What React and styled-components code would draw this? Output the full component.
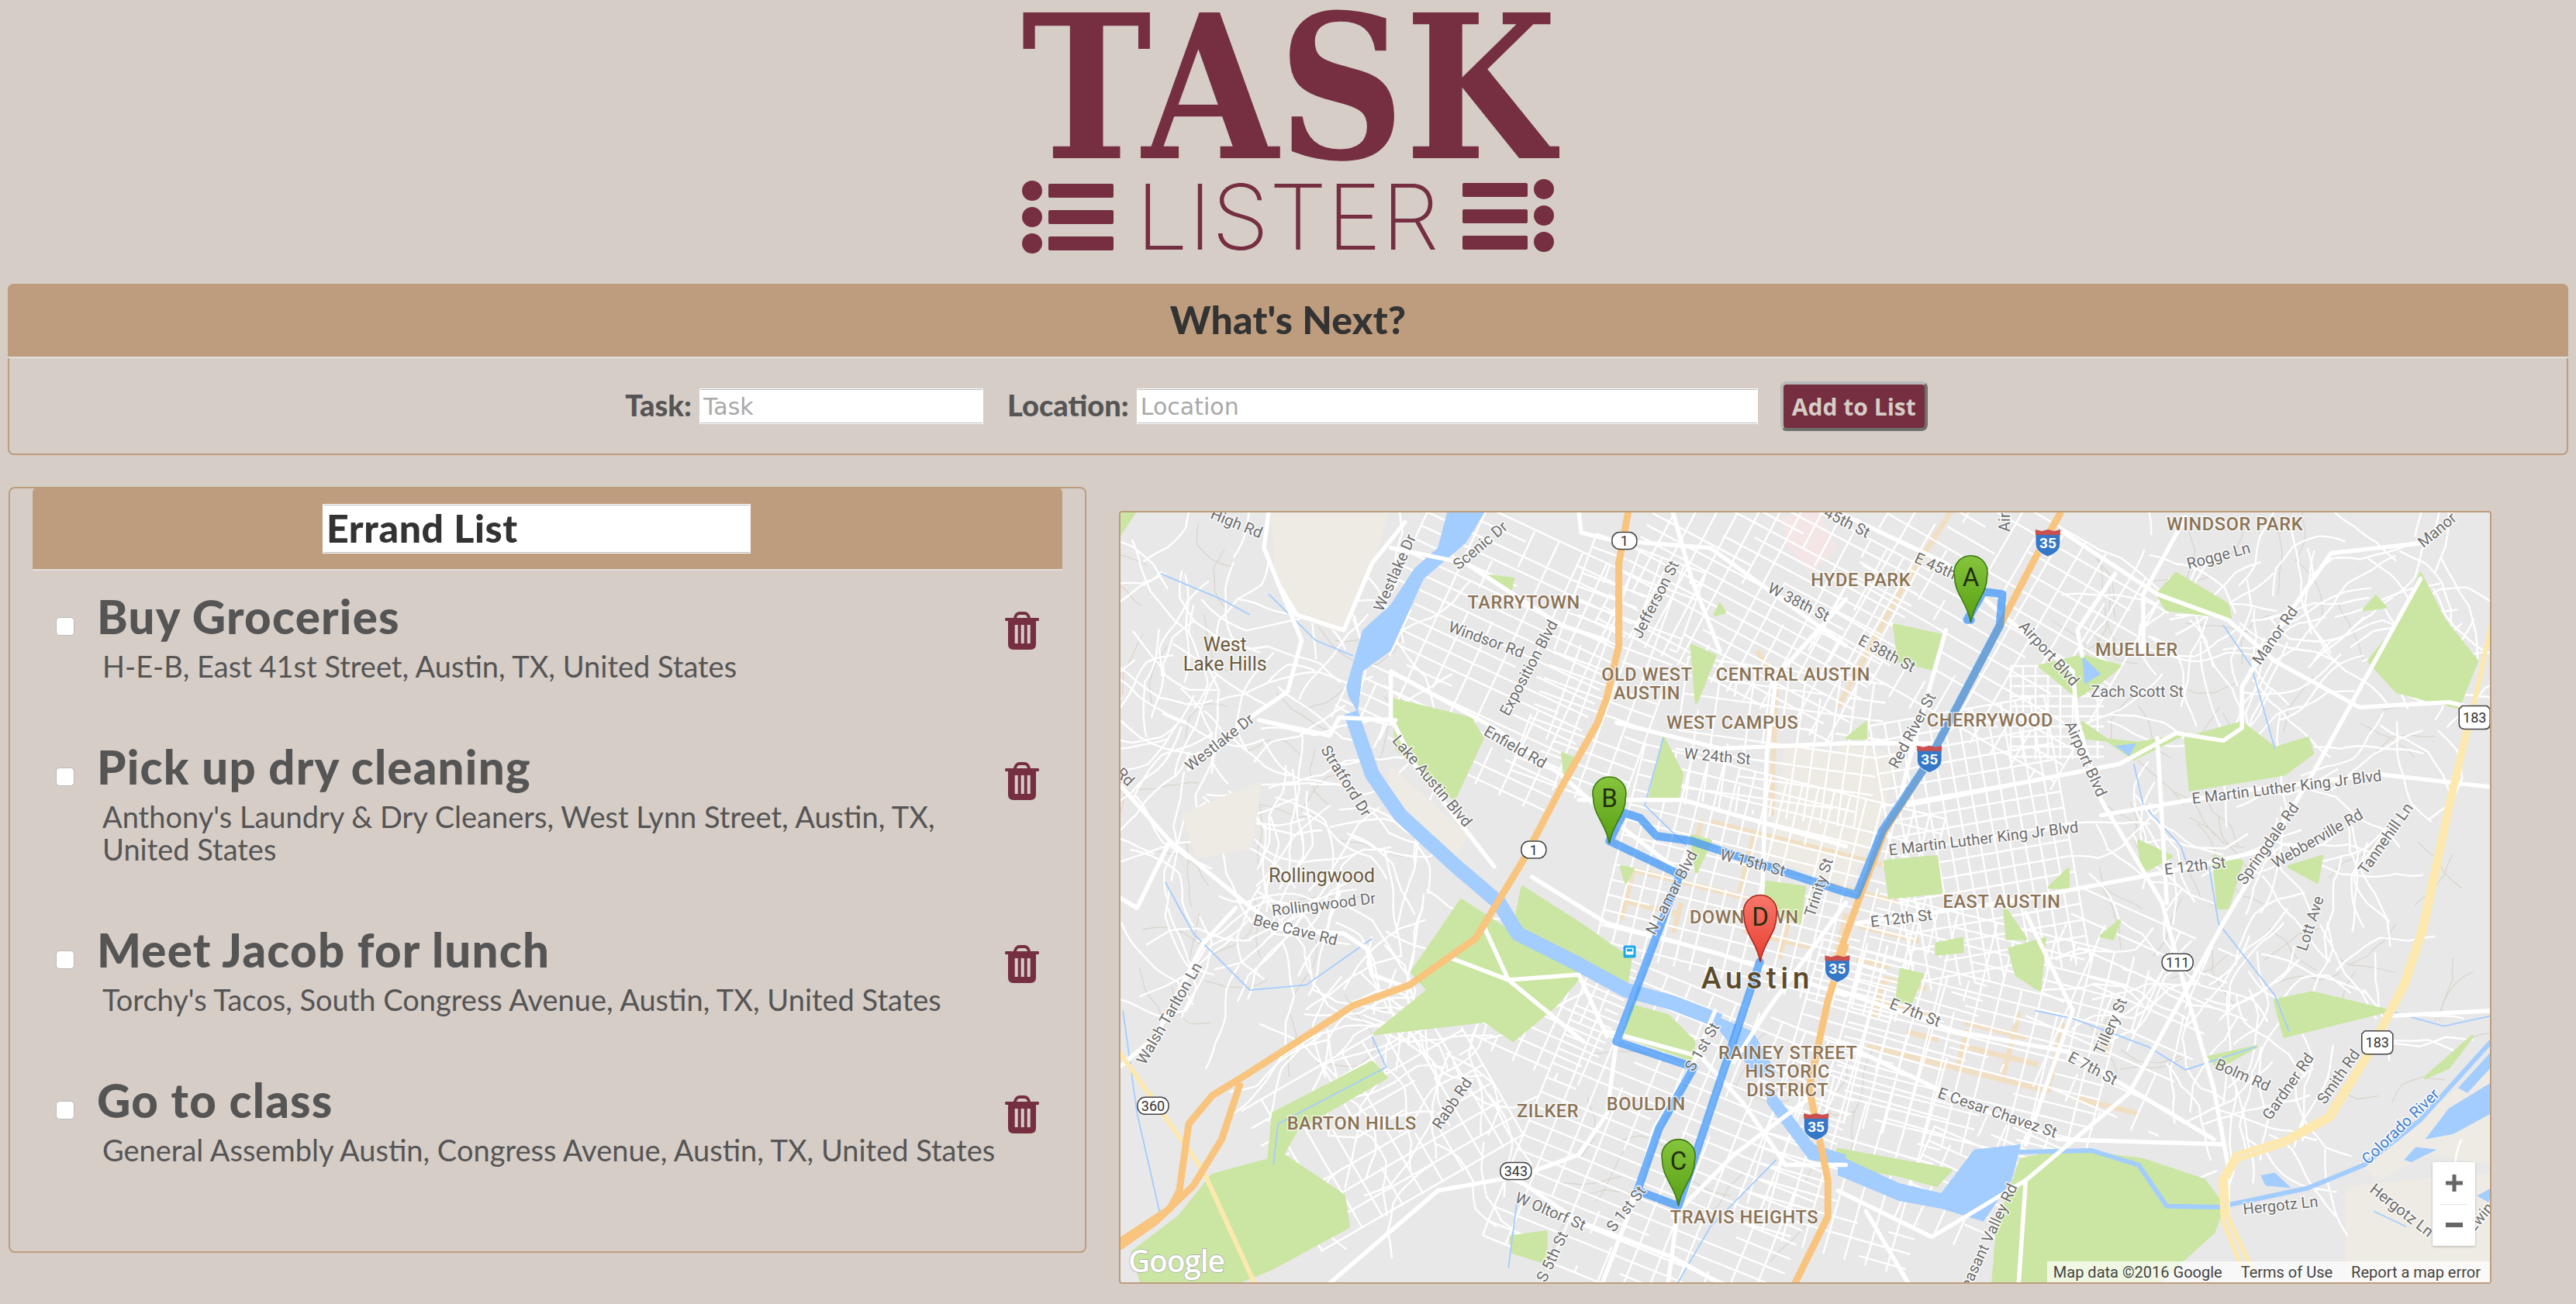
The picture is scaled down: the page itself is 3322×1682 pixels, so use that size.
import React from 'react';
import styled, { createGlobalStyle } from 'styled-components';

const wine = '#752f40';
const tan = '#bd9d7d';
const sand = '#d6cdc7';
const sans = `Lato, 'Open Sans', sans-serif`;

const GlobalStyle = createGlobalStyle`
	html, body {
		margin: 0;
		padding: 0;
		background: ${sand};
		font-family: ${sans};
	}
`;

const Page = styled.div`
	width: 3322px;
	height: 1682px;
	box-sizing: border-box;
	padding: 0 10px;
	overflow: hidden;
`;

const LogoSvg = styled.svg`
	display: block;
	width: 700px;
	height: 340px;
	margin: 0 auto 26px;
`;

const TaskText = styled.text`
	font-family: 'DejaVu Serif', 'Liberation Serif', serif;
	font-weight: 700;
	font-size: 258px;
	fill: ${wine};
`;

const ListerText = styled.text`
	font-family: Inter, Lato, sans-serif;
	font-weight: 250;
	font-size: 117px;
	fill: ${wine};
`;

const Panel = styled.section`
	box-sizing: border-box;
	height: 221px;
	border: 2px solid ${tan};
	border-top: 0;
	border-radius: 8px;
`;

const PanelHead = styled.h2`
	margin: 0 -2px;
	height: 92px;
	padding-bottom: 2px;
	background: ${tan};
	border-bottom: 2px solid #e3dfdb;
	border-radius: 8px 8px 0 0;
	display: flex;
	align-items: center;
	justify-content: center;
	font-size: 50px;
	letter-spacing: 0.2px;
	font-weight: 900;
	color: #333;
`;

const Form = styled.form`
	display: flex;
	align-items: center;
	justify-content: center;
	padding: 30px 30px 0 0;
`;

const Label = styled.label`
	font-size: 38px;
	font-weight: 900;
	color: #555;
	margin: 0 10px 5px 0;
`;

const Field = styled.input`
	box-sizing: border-box;
	width: ${({ $w }) => $w}px;
	height: 46px;
	margin-right: ${({ $gap }) => $gap}px;
	padding: 0 4px;
	background: #fff;
	border: 1px solid #fff;
	box-shadow: inset 0 1px 0 #bbb, inset 0 -1px 0 #bbb;
	font-family: 'DejaVu Sans', sans-serif;
	font-size: 30px;
	outline: none;
	&::placeholder {
		color: #a9a9a9;
		opacity: 1;
	}
`;

const AddButton = styled.button`
	box-sizing: border-box;
	width: 190px;
	height: 64px;
	background: ${wine};
	border: 4px solid;
	border-color: #b8b8b8 #707070 #707070 #b8b8b8;
	border-radius: 8px;
	font-family: 'Open Sans', sans-serif;
	font-weight: 700;
	font-size: 30px;
	color: ${sand};
	padding: 0;
`;

const Columns = styled.div`
	display: flex;
	align-items: flex-start;
	margin-top: 41px;
	padding-left: 1px;
`;

const ListPanel = styled.section`
	box-sizing: border-box;
	width: 1390px;
	height: 988px;
	border: 2px solid ${tan};
	border-radius: 8px;
`;

const ListHead = styled.div`
	margin: -2px 29px 0;
	height: 84px;
	background: ${tan};
	border-bottom: 2px solid #e3dfdb;
	border-radius: 8px 8px 0 0;
	padding: 22px 0 0 374px;
`;

const ListTitle = styled.div`
	box-sizing: border-box;
	width: 552px;
	height: 64px;
	padding-left: 4px;
	background: #fff;
	border: 1px solid #fff;
	box-shadow: inset 0 1px 0 #bbb, inset 0 -1px 0 #bbb;
	font-size: 50px;
	letter-spacing: 0.6px;
	line-height: 60px;
	font-weight: 900;
	color: #333;
`;

const List = styled.ul`
	list-style: none;
	margin: 0;
	padding: 27px 59px 0;
`;

const Item = styled.li`
	display: flex;
	align-items: flex-start;
	margin-bottom: 76px;
`;

const Check = styled.input`
	appearance: none;
	flex: none;
	box-sizing: border-box;
	width: 24px;
	height: 24px;
	margin: 33px 29px 0 0;
	background: #fff;
	border: 1px solid #bbb;
	border-radius: 5px;
`;

const ItemText = styled.div`
	flex: 1;
	min-width: 0;
`;

const ItemTitle = styled.h3`
	margin: 0 0 11px;
	font-size: 60px;
	letter-spacing: 1.2px;
	line-height: 64px;
	font-weight: 900;
	color: #555;
`;

const ItemPlace = styled.p`
	margin: 0 0 1px;
	padding: 0 7px;
	font-size: 38px;
	line-height: 42px;
	color: #555;
`;

const Trash = styled.svg`
	flex: none;
	width: 44px;
	height: 49px;
	margin-top: 26px;
	fill: ${wine};
`;

const MapBox = styled.div`
	position: relative;
	flex: none;
	box-sizing: border-box;
	width: 1770px;
	height: 997px;
	margin: 31px 0 0 42px;
	border: 2px solid ${tan};
	border-radius: 4px;
	overflow: hidden;
	background: #e8e8e8;
`;

const MapSvg = styled.svg`
	display: block;
	width: 1770px;
	height: 997px;
	margin: -2px;
`;

const Street = styled.text`
	font-family: Roboto, sans-serif;
	font-size: 20px;
	fill: #6d6d6d;
	stroke: #fff;
	stroke-width: 3px;
	stroke-opacity: 0.75;
	paint-order: stroke;
	text-anchor: middle;
`;

const Area = styled.text`
	font-family: Roboto, sans-serif;
	font-size: 23.5px;
	font-weight: 500;
	letter-spacing: 0.6px;
	fill: #8b7355;
	stroke: #fff;
	stroke-width: 3px;
	stroke-opacity: 0.7;
	paint-order: stroke;
	text-anchor: middle;
`;

const Place = styled.text`
	font-family: Roboto, sans-serif;
	font-size: 25px;
	fill: #6b5b3e;
	stroke: #fff;
	stroke-width: 3px;
	stroke-opacity: 0.7;
	paint-order: stroke;
	text-anchor: middle;
`;

const City = styled.text`
	font-family: Roboto, sans-serif;
	font-size: 39px;
	font-weight: 500;
	letter-spacing: 5.5px;
	fill: #5c4a2c;
	stroke: #fff;
	stroke-width: 3px;
	stroke-opacity: 0.6;
	paint-order: stroke;
	text-anchor: middle;
`;

const RiverLabel = styled(Street)`
	fill: #3f7fcf;
`;

const ShieldText = styled.text`
	font-family: Roboto, sans-serif;
	font-size: 18px;
	fill: #333;
	text-anchor: middle;
`;

const InterstateText = styled.text`
	font-family: Roboto, sans-serif;
	font-size: 19px;
	font-weight: 700;
	fill: #fff;
	text-anchor: middle;
`;

const PinLetter = styled.text`
	font-family: Roboto, sans-serif;
	font-size: 33px;
	fill: #22300f;
	text-anchor: middle;
`;

const GoogleMark = styled.text`
	font-family: 'Open Sans', sans-serif;
	font-size: 39px;
	font-weight: 600;
	letter-spacing: -1.2px;
	fill: #fff;
	stroke: #a8a8a8;
	stroke-width: 1.5px;
	paint-order: stroke;
`;

const ZoomControl = styled.div`
	position: absolute;
	right: 19px;
	bottom: 47px;
	width: 55px;
	height: 108px;
	background: #fff;
	border-radius: 2px;
	box-shadow: 0 1px 3px rgba(0, 0, 0, 0.25);
	display: flex;
	flex-direction: column;
	align-items: center;
`;

const ZoomButton = styled.div`
	flex: 1;
	display: flex;
	align-items: center;
	justify-content: center;
	width: 100%;
`;

const ZoomRule = styled.div`
	width: 36px;
	height: 1px;
	background: #e4e4e4;
`;

const Credits = styled.div`
	position: absolute;
	right: 0;
	bottom: 0;
	height: 27px;
	display: flex;
	gap: 24px;
	align-items: center;
	padding: 0 12px 0 8px;
	background: rgba(255, 255, 255, 0.7);
	font-family: Roboto, sans-serif;
	font-size: 20px;
	color: #444;
`;

// crop coordinates -> map coordinates (left and right half of the map)
const toL = (x, y) => [x / 1.65 - 13, y / 1.5077 - 18.6];
const toR = (x, y) => [x / 1.65 + 927, y / 1.5077 - 18.6];
const trace = (to, nums, close) => {
	let out = '';
	for (let i = 0; i < nums.length; i += 2) {
		const [x, y] = to(nums[i], nums[i + 1]);
		out += `${i ? 'L' : 'M'}${x.toFixed(1)} ${y.toFixed(1)}`;
	}
	return out + (close ? 'Z' : '');
};
const L = (...n) => trace(toL, n);
const R = (...n) => trace(toR, n);
const LZ = (...n) => trace(toL, n, true);
const RZ = (...n) => trace(toR, n, true);

let seed = 7;
const rnd = () => {
	seed = (seed * 16807) % 2147483647;
	return seed / 2147483647;
};

const grid = (cx, cy, w, h, deg, a, b, drop = 0.14) => {
	const t = (deg * Math.PI) / 180;
	const c = Math.cos(t);
	const s = Math.sin(t);
	const at = (u, v) => `${(cx + u * c - v * s).toFixed(1)} ${(cy + u * s + v * c).toFixed(1)}`;
	let out = '';
	for (let v = -h / 2; v <= h / 2; v += a) {
		let u = -w / 2;
		while (u < w / 2) {
			const len = 24 + rnd() * 70;
			if (rnd() > drop) out += `M${at(u, v)}L${at(Math.min(u + len, w / 2), v)}`;
			u += len;
		}
	}
	for (let u = -w / 2; u <= w / 2; u += b) {
		let v = -h / 2;
		while (v < h / 2) {
			const len = 24 + rnd() * 70;
			if (rnd() > drop) out += `M${at(u, v)}L${at(u, Math.min(v + len, h / 2))}`;
			v += len;
		}
	}
	return out;
};

const wander = (x0, y0, w, h, count, steps = 4, stride = 18) => {
	let out = '';
	for (let i = 0; i < count; i++) {
		let x = x0 + rnd() * w;
		let y = y0 + rnd() * h;
		let dir = rnd() * 6.28;
		out += `M${x.toFixed(1)} ${y.toFixed(1)}`;
		for (let k = 0; k < steps; k++) {
			dir += (rnd() - 0.5) * 1.2;
			const mx = x + Math.cos(dir) * stride;
			const my = y + Math.sin(dir) * stride;
			dir += (rnd() - 0.5) * 0.9;
			x = mx + Math.cos(dir) * stride;
			y = my + Math.sin(dir) * stride;
			out += `Q${mx.toFixed(1)} ${my.toFixed(1)} ${x.toFixed(1)} ${y.toFixed(1)}`;
		}
	}
	return out;
};

const sideStreets = [
	grid(480, 180, 300, 330, 25, 19, 34),
	grid(630, 210, 150, 330, 20, 18, 30),
	grid(830, 110, 350, 260, 28, 17, 24),
	grid(850, 300, 260, 190, 8, 24, 22),
	grid(840, 480, 400, 270, 14, 20, 21, 0.08),
	grid(720, 820, 380, 400, 22, 20, 32),
	grid(960, 770, 220, 390, 16, 20, 28),
	grid(1110, 430, 350, 230, 80, 19, 21, 0.08),
	grid(1110, 680, 340, 300, 14, 19, 26),
	grid(1120, 140, 360, 300, 30, 24, 30),
	grid(1290, 650, 220, 260, 24, 36, 46, 0.3),
	grid(340, 790, 300, 210, -30, 26, 30, 0.3),
	grid(560, 640, 160, 170, 24, 20, 30),
	grid(1210, 260, 120, 120, 0, 13, 16, 0.03),
	grid(1180, 900, 320, 170, 24, 20, 28, 0.2),
	wander(0, 60, 350, 340, 70),
	wander(40, 380, 360, 320, 70),
	wander(260, 640, 220, 240, 30),
	wander(1320, 30, 420, 300, 70),
	wander(1320, 350, 300, 300, 50),
	wander(1350, 650, 300, 260, 30),
].join('');

const lanes = [
	wander(0, 60, 370, 640, 40, 3, 14),
	wander(1250, 40, 500, 720, 60, 3, 14),
	wander(560, 700, 400, 280, 20, 3, 14),
].join('');

const tanStrips = [
	grid(850, 500, 380, 150, 14, 42, 70, 0.5),
	grid(1150, 690, 360, 90, 14, 30, 60, 0.45),
	L(1380, 300, 1420, 360, 1410, 620),
	R(240, 30, 130, 190, 0, 410),
].join('');

const beige = [
	RZ(0, 480, 120, 500, 100, 620, 30, 750, 0, 760),
	LZ(1440, 480, 1568, 500, 1568, 760, 1400, 700),
	RZ(1080, 1350, 1390, 1320, 1390, 1530, 1080, 1530),
	RZ(1110, 1300, 1390, 1100, 1390, 1300, 1260, 1280, 1150, 1330),
];

const openLand = [
	LZ(350, 30, 590, 30, 560, 130, 490, 260, 400, 230, 360, 170),
	LZ(600, 530, 760, 660, 720, 720, 600, 590),
	LZ(160, 620, 320, 560, 300, 680, 190, 700),
	RZ(1090, 1345, 1390, 1320, 1390, 1530, 1090, 1530),
];

const pinkish = [
	LZ(1430, 40, 1510, 30, 1550, 100, 1490, 150, 1440, 90),
	RZ(140, 470, 200, 480, 190, 490),
];

const parks = [
	LZ(605, 395, 770, 432, 795, 470, 735, 588, 612, 490),
	LZ(645, 925, 750, 785, 880, 862, 1005, 930, 950, 990, 860, 1058, 800, 1020, 565, 1045, 680, 960),
	LZ(50, 1470, 150, 1400, 220, 1320, 340, 1290, 350, 1200, 560, 1100, 590, 1130, 400, 1230, 370, 1280, 500, 1360, 510, 1420, 350, 1500, 270, 1530, 70, 1530),
	LZ(880, 760, 1000, 830, 1110, 900, 1100, 960, 970, 900, 860, 850),
	LZ(1110, 990, 1190, 1010, 1245, 1060, 1240, 1095, 1100, 1050),
	LZ(1150, 590, 1180, 470, 1220, 540, 1210, 590),
	LZ(1240, 290, 1290, 310, 1250, 400),
	LZ(1240, 660, 1280, 670, 1250, 730),
	LZ(1400, 750, 1480, 760, 1470, 830, 1395, 800),
	LZ(22, 30, 55, 30, 22, 75),
	LZ(812, 155, 860, 160, 855, 180),
	LZ(1090, 720, 1115, 725, 1100, 750),
	LZ(855, 1440, 930, 1430, 930, 1490, 860, 1470),
	LZ(965, 500, 990, 510, 970, 540),
	LZ(1300, 210, 1310, 225, 1290, 230),
	RZ(680, 190, 720, 150, 830, 210, 835, 235, 700, 220),
	RZ(1130, 320, 1200, 240, 1240, 150, 1290, 240, 1360, 320, 1320, 410, 1190, 380),
	RZ(750, 570, 740, 470, 860, 440, 930, 490, 1000, 470, 1010, 500, 950, 540),
	RZ(510, 390, 430, 330, 520, 310, 600, 330, 560, 360),
	RZ(520, 440, 630, 510, 740, 460, 700, 470, 640, 480, 530, 470),
	RZ(930, 980, 1010, 965, 1170, 1000, 950, 1050),
	RZ(390, 1290, 480, 1270, 650, 1290, 780, 1330, 820, 1380, 800, 1430, 680, 1530, 330, 1530, 340, 1420),
	RZ(100, 710, 210, 700, 220, 770, 110, 780),
	RZ(120, 250, 220, 270, 200, 335, 130, 320),
	RZ(1120, 220, 1145, 195, 1165, 215),
	RZ(355, 800, 400, 860, 360, 860),
	RZ(365, 880, 440, 860, 430, 960, 380, 930),
	RZ(640, 670, 710, 700, 650, 730),
	RZ(960, 720, 1030, 700, 1020, 750),
	RZ(790, 1090, 890, 1070, 810, 1110),
	RZ(450, 760, 490, 725, 490, 760),
	RZ(210, 870, 265, 860, 265, 885, 210, 890),
	RZ(135, 920, 180, 930, 155, 985, 125, 980),
	RZ(1250, 1130, 1350, 1050, 1300, 1110),
	RZ(560, 855, 600, 825, 585, 860),
	RZ(0, 1270, 120, 1290, 240, 1310, 210, 1340, 130, 1320, 0, 1300),
	RZ(20, 470, 60, 440, 60, 470),
	RZ(800, 700, 860, 710, 830, 800, 810, 800),
];

const lakes = [
	LZ(720, 30, 800, 30, 760, 90, 670, 160, 600, 300, 540, 340, 530, 420, 510, 390, 505, 370, 540, 260, 600, 210, 650, 140, 700, 100),
	RZ(0, 1280, 130, 1335, 220, 1355, 290, 1270, 390, 1260, 370, 1330, 310, 1410, 220, 1385, 130, 1370, 0, 1320),
	RZ(1250, 1250, 1300, 1190, 1390, 1140, 1390, 1200, 1310, 1240),
	RZ(1320, 1150, 1390, 1080, 1390, 1110, 1340, 1160),
	RZ(1205, 1290, 1230, 1265, 1275, 1270, 1220, 1295),
	RZ(900, 1320, 930, 1315, 965, 1345, 910, 1340),
	RZ(1360, 1360, 1390, 1345, 1390, 1375),
	RZ(520, 310, 560, 345, 525, 365),
	RZ(590, 485, 635, 480, 620, 505),
	LZ(1290, 1010, 1370, 1040, 1420, 1120, 1380, 1130, 1300, 1040),
	LZ(1400, 1140, 1500, 1260, 1568, 1280, 1568, 1300, 1490, 1290, 1400, 1180),
];

const river = [
	L(515, 420, 560, 540, 620, 620, 740, 720, 830, 790, 870, 850, 1000, 910, 1100, 960, 1200, 985, 1300, 1020),
];

const riverEast = R(385, 1275, 540, 1272, 640, 1300, 700, 1380, 810, 1382, 1000, 1345, 1120, 1300, 1240, 1212, 1390, 1060);

const creeks = [
	L(110, 150, 240, 200, 300, 230),
	L(340, 190, 440, 280, 520, 310),
	L(120, 750, 180, 850, 300, 960, 420, 950, 560, 860),
	L(30, 1000, 60, 1200, 110, 1400),
	L(560, 1050, 590, 1110, 360, 1220, 350, 1300),
	L(1180, 470, 1140, 600, 1230, 680),
	L(870, 1360, 850, 1500),
	L(1210, 1530, 1280, 1420, 1420, 1290),
	R(660, 610, 730, 680, 745, 720),
	R(790, 720, 810, 830, 930, 970, 960, 1040),
	R(820, 250, 880, 330, 930, 490),
	R(420, 1000, 500, 1015, 660, 1070, 740, 1115, 890, 1070),
	R(630, 520, 650, 600),
	R(1170, 1000, 1290, 1030, 1390, 1010),
	R(1140, 1390, 1210, 1420),
].join('');

const arterials = [
	L(1000, 30, 1005, 70, 1070, 85, 1280, 100, 1568, 290),
	L(600, 340, 820, 450, 960, 540, 1060, 620, 1200, 720),
	L(320, 435, 470, 465, 490, 430, 610, 435),
	L(22, 560, 130, 670, 290, 790, 360, 840, 500, 850, 550, 880, 560, 930, 620, 950),
	L(340, 30, 330, 100, 410, 280, 380, 380, 300, 430, 170, 530),
	L(360, 170, 400, 230, 500, 260, 560, 130, 630, 50),
	L(270, 800, 200, 870, 100, 1050, 22, 1110),
	L(720, 895, 850, 940, 1010, 1060),
	L(800, 840, 850, 940, 1000, 930, 1060, 1050),
	L(1225, 700, 1130, 930, 1080, 1060, 1060, 1200, 1000, 1280, 880, 1320, 700, 1350, 470, 1530),
	L(1290, 1000, 1240, 1110, 1160, 1230, 1125, 1350, 1050, 1530),
	L(1385, 905, 1212, 1380, 1190, 1530),
	L(1000, 590, 1220, 590, 1568, 680),
	L(1080, 440, 1300, 490, 1568, 480),
	L(1568, 200, 1420, 350, 1400, 500, 1390, 780),
	L(900, 740, 1060, 830, 1300, 890, 1568, 970),
	L(1060, 1040, 1260, 1090, 1350, 1180, 1440, 1300, 1568, 1300),
	L(840, 1310, 1000, 1410, 1200, 1480, 1300, 1530),
	L(1200, 30, 1240, 160, 1300, 300),
	L(600, 340, 600, 430, 650, 520, 760, 650, 820, 720),
	L(22, 780, 60, 800, 130, 670),
	L(600, 100, 760, 130, 960, 250, 1060, 280),
	L(1568, 790, 1400, 1000, 1330, 1100),
	L(1200, 1400, 1330, 1280, 1490, 1170),
	R(350, 230, 500, 340, 510, 440, 560, 590, 690, 790, 740, 960, 800, 1150, 830, 1300, 830, 1400),
	R(1250, 90, 1050, 110, 920, 280, 860, 370, 860, 450, 820, 475, 720, 460, 600, 520, 150, 600),
	R(480, 70, 680, 190, 830, 240, 930, 320, 1110, 410, 1300, 400, 1390, 420),
	R(560, 620, 880, 570, 1150, 540, 1390, 565),
	R(40, 830, 350, 790, 700, 730, 900, 690),
	R(1240, 160, 1010, 540, 820, 830, 620, 1160, 400, 1330, 385, 1530),
	R(0, 960, 250, 1040, 490, 1080, 800, 1250),
	R(0, 1060, 300, 1190, 470, 1250, 820, 1260),
	R(0, 1350, 200, 1440, 400, 1330),
	R(60, 1390, 150, 1530),
	R(400, 810, 500, 1000, 400, 1260),
	R(590, 150, 510, 260, 520, 310),
	R(220, 480, 0, 480),
	R(740, 40, 650, 190, 650, 300),
	R(230, 260, 150, 520, 130, 600),
	R(0, 30, 230, 130, 350, 230),
	R(680, 470, 700, 790),
	R(1390, 1000, 1180, 1010),
].join('');

const yellowways = [
	L(22, 1080, 200, 1310, 310, 1530),
	R(1390, 250, 1350, 420, 1310, 580, 1250, 840, 1210, 950, 1130, 1090, 1050, 1210, 950, 1260, 850, 1290, 825, 1330, 830, 1400, 885, 1510),
	R(1345, 420, 1300, 590, 1240, 840, 1200, 950, 1120, 1090, 1040, 1205, 950, 1250, 845, 1280, 815, 1330, 820, 1410, 860, 1500),
];

const orangeways = [
	L(1105, 30, 1085, 130, 1085, 290, 1060, 390, 1040, 440, 960, 570, 880, 710, 780, 860, 640, 950, 520, 990, 300, 1120, 220, 1165, 170, 1220, 150, 1350, 130, 1385, 22, 1450),
	L(280, 1140, 240, 1250, 180, 1340, 100, 1410, 22, 1460),
	R(475, 30, 420, 120, 340, 260, 190, 520, 100, 650, 30, 820, 0, 900),
	L(1568, 870, 1530, 980, 1490, 1150, 1530, 1330, 1530, 1400, 1460, 1530),
];

const route = [
	R(283, 240, 275, 240, 310, 185, 350, 190, 345, 250, 190, 520, 95, 650, 40, 775, 0, 765),
	L(1568, 770, 1240, 670, 1165, 660, 1130, 625, 1095, 615, 1065, 670, 1215, 735, 1080, 1060, 1245, 1110, 1170, 1230, 1125, 1350, 1212, 1380, 1385, 905),
].join('');

const streets = [
	[toL, 272, 52, 22, 'High Rd'], [toL, 608, 148, -66, 'Westlake Dr'], [toL, 790, 95, -40, 'Scenic Dr'],
	[toL, 1163, 200, -63, 'Jefferson St'], [toL, 803, 278, 20, 'Windsor Rd'], [toL, 893, 333, -62, 'Exposition Blvd'],
	[toL, 1468, 205, 27, 'W 38th St'], [toL, 1295, 505, 5, 'W 24th St'], [toL, 235, 478, -38, 'Westlake Dr'],
	[toL, 35, 545, 45, 'Rd'], [toL, 505, 553, 58, 'Stratford Dr'], [toL, 688, 553, 50, 'Lake Austin Blvd'],
	[toL, 865, 487, 30, 'Enfield Rd'], [toL, 457, 793, -7, 'Rollingwood Dr'], [toL, 397, 843, 14, 'Bee Cave Rd'],
	[toL, 128, 1005, -60, 'Walsh Tarlton Ln'], [toL, 730, 1180, -56, 'Rabb Rd'], [toL, 940, 1390, 23, 'W Oltorf St'],
	[toL, 943, 1478, -65, 'S 5th St'], [toL, 1100, 1385, -52, 'S 1st St'], [toL, 1262, 1070, -60, 'S 1st St'],
	[toL, 1197, 770, -62, 'N Lamar Blvd'], [toL, 1370, 712, 15, 'W 15th St'], [toL, 1510, 760, -72, 'Trinity St'],
	[toR, 20, 50, 27, '45th St'], [toR, 355, 50, -90, 'Air'], [toR, 810, 115, -15, 'Rogge Ln'],
	[toR, 1275, 65, -40, 'Manor'], [toR, 208, 135, 24, 'E 45th'], [toR, 105, 305, 28, 'E 38th St'],
	[toR, 450, 305, 48, 'Airport Blvd'], [toR, 930, 270, -55, 'Manor Rd'], [toR, 637, 380, 0, 'Zach Scott St'],
	[toR, 158, 455, -62, 'Red River St'], [toR, 528, 510, 66, 'Airport Blvd'],
	[toR, 955, 565, -7, 'E Martin Luther King Jr Blvd'], [toR, 310, 665, -7, 'E Martin Luther King Jr Blvd'],
	[toR, 760, 718, -7, 'E 12th St'], [toR, 135, 820, -7, 'E 12th St'], [toR, 915, 675, -55, 'Springdale Rd'],
	[toR, 1020, 665, -30, 'Webberville Rd'], [toR, 1165, 665, -55, 'Tannehill Ln'], [toR, 1005, 830, -72, 'Lott Ave'],
	[toR, 165, 1003, 21, 'E 7th St'], [toR, 580, 1030, -66, 'Tillery St'], [toR, 543, 1112, 28, 'E 7th St'],
	[toR, 340, 1198, 19, 'E Cesar Chavez St'], [toR, 862, 1125, 24, 'Bolm Rd'], [toR, 958, 1147, -55, 'Gardner Rd'],
	[toR, 1065, 1128, -55, 'Smith Rd'], [toR, 942, 1378, -6, 'Hergotz Ln'], [toR, 1200, 1388, 38, 'Hergotz Ln'],
	[toR, 315, 1450, -65, 'Pleasant Valley Rd'], [toR, 1372, 1395, -50, 'Ewing'],
];

const areas = [
	[toL, 883, 205, 'TARRYTOWN'], [toL, 1145, 345, 'OLD WEST'], [toL, 1145, 381, 'AUSTIN'], [toL, 1327, 438, 'WEST CAMPUS'],
	[toL, 517, 1218, 'BARTON HILLS'], [toL, 934, 1193, 'ZILKER'], [toL, 1143, 1180, 'BOULDIN'], [toL, 1352, 1400, 'TRAVIS HEIGHTS'],
	[toL, 1352, 816, 'DOWNTOWN'], [toL, 1444, 1117, 'HISTORIC'], [toL, 1444, 1153, 'DISTRICT'],
	[toL, 1600, 160, 'HYDE PARK'], [toL, 1456, 344, 'CENTRAL AUSTIN'], [toL, 1445, 1081, 'RAINEY STREET'],
	[toR, 845, 52, 'WINDSOR PARK'], [toR, 636, 297, 'MUELLER'], [toR, 324, 434, 'CHERRYWOOD'], [toR, 349, 786, 'EAST AUSTIN'],
];

const places = [
	[247, 288, 'West'], [247, 325, 'Lake Hills'], [453, 736, 'Rollingwood'],
];

const shields = [
	[toL, 1097, 86, '1'], [toL, 904, 687, '1'], [toL, 94, 1185, '360'], [toL, 866, 1312, '343'], [toR, 723, 906, '111'],
];

const usRoutes = [[toR, 1355, 430], [toR, 1148, 1062]];
const interstates = [[toL, 1550, 918], [toL, 1505, 1225], [toR, 447, 90], [toR, 195, 510]];
const pins = [
	[toR, 283, 245, 'A', 'g'], [toL, 1065, 675, 'B', 'g'], [toL, 1212, 1380, 'C', 'g'], [toL, 1386, 905, 'D', 'r'],
];

const tasks = [
	{ title: 'Buy Groceries', place: 'H-E-B, East 41st Street, Austin, TX, United States' },
	{ title: 'Pick up dry cleaning', place: "Anthony's Laundry & Dry Cleaners, West Lynn Street, Austin, TX, United States" },
	{ title: 'Meet Jacob for lunch', place: "Torchy's Tacos, South Congress Avenue, Austin, TX, United States" },
	{ title: 'Go to class', place: 'General Assembly Austin, Congress Avenue, Austin, TX, United States' },
];

const TrashIcon = () => (
	<Trash viewBox='0 0 44 49'>
		<path
			fillRule='evenodd'
			d='M11 8C12 3 15 0 19 0H25C29 0 32 3 33 8H43Q44 8 44 10Q44 12 43 12H40V42Q40 49 33 49H11Q4 49 4 42V12H1Q0 12 0 10Q0 8 1 8ZM15 8H29C28.5 5.5 27 4 25 4H19C17 4 15.5 5.5 15 8ZM12.7 17V41H16.7V17ZM20.7 17V41H24.7V17ZM28.7 17V41H32.7V17Z'
		/>
	</Trash>
);

const Logo = () => {
	const bars = [0, 34, 68];
	return (
		<LogoSvg viewBox='0 0 700 340'>
			<TaskText x='6' y='204' textLength='691' lengthAdjust='spacingAndGlyphs'>
				TASK
			</TaskText>
			<ListerText x='154' y='322' textLength='391' lengthAdjust='spacingAndGlyphs'>
				LISTER
			</ListerText>
			{bars.map((dy) => (
				<g key={dy} fill={wine}>
					<circle cx='20' cy={246 + dy} r='13' />
					<rect x='41' y={237 + dy} width='84' height='18' rx='2' />
					<rect x='575' y={236 + dy} width='84' height='18' rx='2' />
					<circle cx='680' cy={244 + dy} r='13' />
				</g>
			))}
		</LogoSvg>
	);
};

const Pin = ({ at, letter, kind }) => (
	<g transform={`translate(${at[0]} ${at[1]})`}>
		<path
			d='M0 0C-4 -26 -21 -36 -21 -60A21.5 21.5 0 1 1 21 -60C21 -36 4 -26 0 0Z'
			fill={`url(#pin-${kind})`}
			stroke={kind === 'g' ? '#3c7a12' : '#a8271c'}
			strokeWidth='1.6'
		/>
		<PinLetter y='-47'>{letter}</PinLetter>
	</g>
);

const AustinMap = () => (
	<MapSvg viewBox='0 0 1770 997'>
		<defs>
			<linearGradient id='pin-g' x1='0' y1='0' x2='0' y2='1'>
				<stop offset='0' stopColor='#86c43c' />
				<stop offset='1' stopColor='#56a014' />
			</linearGradient>
			<linearGradient id='pin-r' x1='0' y1='0' x2='0' y2='1'>
				<stop offset='0' stopColor='#f8776a' />
				<stop offset='1' stopColor='#e63e30' />
			</linearGradient>
		</defs>
		{beige.map((p) => (
			<path key={p} d={p} fill='#eeebe4' />
		))}
		{pinkish.map((p) => (
			<path key={p} d={p} fill='#f4e6e6' />
		))}
		<path d={lanes} fill='none' stroke='#d9d3ca' strokeWidth='1.2' />
		<path d={tanStrips} fill='none' stroke='#f1dfc4' strokeWidth='7' />
		<path d={sideStreets} fill='none' stroke='#fff' strokeWidth='2.4' />
		{openLand.map((p) => (
			<path key={p} d={p} fill='#eeebe4' stroke='#eeebe4' strokeWidth='6' strokeLinejoin='round' />
		))}
		{parks.map((p) => (
			<path key={p} d={p} fill='#cbe6a3' stroke='#cbe6a3' strokeWidth='4' strokeLinejoin='round' />
		))}
		<path d={creeks} fill='none' stroke='#a3ccff' strokeWidth='1.8' />
		{lakes.map((p) => (
			<path key={p} d={p} fill='#a3ccff' />
		))}
		{river.map((p) => (
			<path key={p} d={p} fill='none' stroke='#a3ccff' strokeWidth='19' strokeLinejoin='round' />
		))}
		<path d={riverEast} fill='none' stroke='#a3ccff' strokeWidth='6' strokeLinejoin='round' />
		<path d={arterials} fill='none' stroke='#fff' strokeWidth='5.5' strokeLinejoin='round' strokeLinecap='round' />
		{yellowways.map((p) => (
			<path key={p} d={p} fill='none' stroke='#fde9ae' strokeWidth='6' strokeLinejoin='round' />
		))}
		{orangeways.map((p) => (
			<path key={p} d={p} fill='none' stroke='#f8c47e' strokeWidth='9' strokeLinejoin='round' />
		))}
		<path d={route} fill='none' stroke='#3a94fa' strokeOpacity='0.72' strokeWidth='10.5' strokeLinejoin='round' strokeLinecap='round' />
		{streets.map(([to, x, y, deg, name]) => {
			const [px, py] = to(x, y);
			return (
				<Street key={`${name}${x}`} transform={`translate(${px.toFixed(1)} ${py.toFixed(1)}) rotate(${deg})`} y='7'>
					{name}
				</Street>
			);
		})}
		<RiverLabel transform={`translate(${toR(1197, 1225).join(' ')}) rotate(-44)`} y='7'>
			Colorado River
		</RiverLabel>
		{areas.map(([to, x, y, name]) => {
			const [px, py] = to(x, y);
			return (
				<Area key={name} x={px.toFixed(1)} y={(py + 9).toFixed(1)}>
					{name}
				</Area>
			);
		})}
		{places.map(([x, y, name]) => {
			const [px, py] = toL(x, y);
			return (
				<Place key={name} x={px.toFixed(1)} y={(py + 9).toFixed(1)}>
					{name}
				</Place>
			);
		})}
		<City x={toL(1380, 935)[0]} y={toL(1380, 935)[1] + 14}>
			Austin
		</City>
		{shields.map(([to, x, y, label]) => {
			const [px, py] = to(x, y);
			const w = label.length > 1 ? 40 : 32;
			return (
				<g key={`${label}${x}`} transform={`translate(${px} ${py})`}>
					<rect x={-w / 2} y='-11' width={w} height='22' rx='10' fill='#fff' stroke='#444' strokeWidth='1.5' />
					<ShieldText y='6.5'>{label}</ShieldText>
				</g>
			);
		})}
		{usRoutes.map(([to, x, y]) => {
			const [px, py] = to(x, y);
			return (
				<g key={x} transform={`translate(${px} ${py})`}>
					<path d='M-20 -11L-16 -15H16L20 -11V8Q20 15 12 15H-12Q-20 15 -20 8Z' fill='#fff' stroke='#444' strokeWidth='1.5' />
					<ShieldText y='6.5'>183</ShieldText>
				</g>
			);
		})}
		{interstates.map(([to, x, y]) => {
			const [px, py] = to(x, y);
			return (
				<g key={x} transform={`translate(${px} ${py})`}>
					<path d='M-16 -13H16V2Q16 12 0 18Q-16 12 -16 2Z' fill='#3678c8' stroke='#fff' />
					<path d='M-16 -17L-8 -15L0 -17L8 -15L16 -17V-10H-16Z' fill='#c9504e' />
					<InterstateText y='7'>35</InterstateText>
				</g>
			);
		})}
		<g transform={`translate(${toL(1108, 885).join(' ')})`}>
			<rect x='-8' y='-8' width='16' height='16' rx='2' fill='#1ea7ee' />
			<rect x='-5' y='-5' width='10' height='9' rx='1' fill='#fff' />
			<rect x='-3.5' y='-3.5' width='7' height='3.5' fill='#1ea7ee' />
		</g>
		{pins.map(([to, x, y, letter, kind]) => (
			<Pin key={letter} at={to(x, y)} letter={letter} kind={kind} />
		))}
		<GoogleMark x='12' y='982'>
			Google
		</GoogleMark>
	</MapSvg>
);

const App = () => (
	<Page>
		<GlobalStyle />
		<Logo />
		<Panel>
			<PanelHead>What's Next?</PanelHead>
			<Form>
				<Label>Task:</Label>
				<Field $w={366} $gap={31} placeholder='Task' />
				<Label>Location:</Label>
				<Field $w={801} $gap={29} placeholder='Location' />
				<AddButton type='button'>Add to List</AddButton>
			</Form>
		</Panel>
		<Columns>
			<ListPanel>
				<ListHead>
					<ListTitle>Errand List</ListTitle>
				</ListHead>
				<List>
					{tasks.map((task) => (
						<Item key={task.title}>
							<Check type='checkbox' />
							<ItemText>
								<ItemTitle>{task.title}</ItemTitle>
								<ItemPlace>{task.place}</ItemPlace>
							</ItemText>
							<TrashIcon />
						</Item>
					))}
				</List>
			</ListPanel>
			<MapBox>
				<AustinMap />
				<ZoomControl>
					<ZoomButton>
						<svg width='22' height='22' viewBox='0 0 22 22'>
							<path d='M8.5 0h5v8.5H22v5h-8.5V22h-5v-8.5H0v-5h8.5z' fill='#666' />
						</svg>
					</ZoomButton>
					<ZoomRule />
					<ZoomButton>
						<svg width='22' height='6' viewBox='0 0 22 6'>
							<rect width='22' height='6' fill='#666' />
						</svg>
					</ZoomButton>
				</ZoomControl>
				<Credits>
					<span>Map data ©2016 Google</span>
					<span>Terms of Use</span>
					<span>Report a map error</span>
				</Credits>
			</MapBox>
		</Columns>
	</Page>
);

export default App;
